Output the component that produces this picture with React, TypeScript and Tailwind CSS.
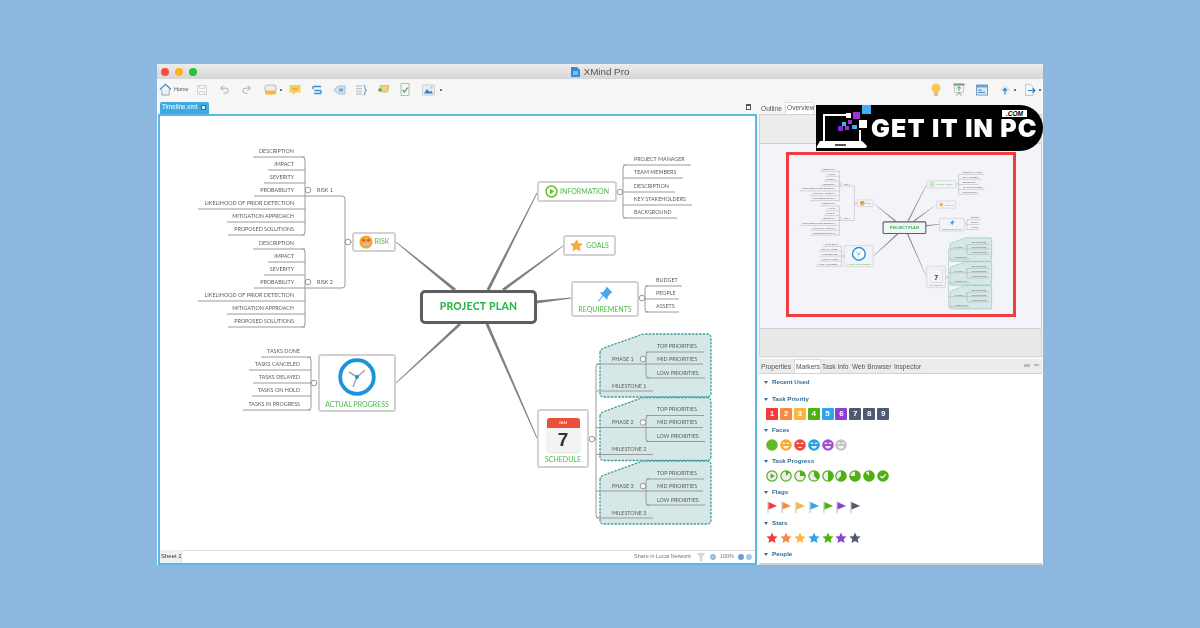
import { Redo2, Undo2 } from 'lucide-react';

// canvas origin in page pixels, the mind map data below is written in page pixels
const OX = 160;
const OY = 116;

const RED = '#f03c3c';
const ORANGE = '#f58a45';
const YELLOW = '#fbb63f';
const GREEN = '#4fb012';
const BLUE = '#30a5e8';
const PURPLE = '#8d3fd2';
const SLATE = '#4f5a72';

type Item = [string, number, number];

const risk1: Item[] = [
  ['DESCRIPTION', 151, 253],
  ['IMPACT', 164, 268],
  ['SEVERITY', 177, 264],
  ['PROBABILITY', 190, 254],
  ['LIKELIHOOD OF PRIOR DETECTION', 203, 198],
  ['MITIGATION APPROACH', 216, 227],
  ['PROPOSED SOLUTIONS', 229, 228],
];
const risk2: Item[] = risk1.map(([t, y, l]) => [t, y + 92, l]);
const progress: Item[] = [
  ['TASKS DONE', 351, 261],
  ['TASKS CANCELED', 364, 249],
  ['TASKS DELAYED', 377, 253],
  ['TASKS ON HOLD', 390, 252],
  ['TASKS IN PROGRESS', 404, 243],
];
const info: Item[] = [
  ['PROJECT MANAGER', 159, 691],
  ['TEAM MEMBERS', 172, 683],
  ['DESCRIPTION', 186, 675],
  ['KEY STAKEHOLDERS', 199, 692],
  ['BACKGROUND', 212, 677],
];
const reqs: Item[] = [
  ['BUDGET', 280, 682],
  ['PEOPLE', 293, 679],
  ['ASSETS', 306, 679],
];
const phases = [0, 63.5, 127];

function taper(x1: number, y1: number, x2: number, y2: number, w1: number, w2: number) {
  const dx = x2 - x1;
  const dy = y2 - y1;
  const len = Math.hypot(dx, dy);
  const nx = -dy / len;
  const ny = dx / len;
  return [
    [x1 + (nx * w1) / 2, y1 + (ny * w1) / 2],
    [x2 + (nx * w2) / 2, y2 + (ny * w2) / 2],
    [x2 - (nx * w2) / 2, y2 - (ny * w2) / 2],
    [x1 - (nx * w1) / 2, y1 - (ny * w1) / 2],
  ]
    .map((p) => p.join(','))
    .join(' ');
}

function leftBracket(x: number, y1: number, y2: number) {
  return `M${x - 3} ${y1} Q${x} ${y1} ${x} ${y1 + 3} V${y2 - 3} Q${x} ${y2} ${x - 3} ${y2}`;
}
function rightBracket(x: number, y1: number, y2: number) {
  return `M${x + 3} ${y1} Q${x} ${y1} ${x} ${y1 + 3} V${y2 - 3} Q${x} ${y2} ${x + 3} ${y2}`;
}

function Label({ x, y, text, right }: { x: number; y: number; text: string; right?: boolean }) {
  return (
    <span
      className={`absolute whitespace-nowrap leading-none text-[5.4px] text-[#5c5c5c] -translate-y-1/2 ${right ? '-translate-x-full' : ''}`}
      style={{ left: x - OX, top: y - OY + 1 }}
    >
      {text}
    </span>
  );
}

function Node({
  x,
  y,
  w,
  h,
  row,
  children,
}: {
  x: number;
  y: number;
  w: number;
  h: number;
  row?: boolean;
  children: React.ReactNode;
}) {
  return (
    <div
      className={`absolute flex items-center justify-center bg-white border-2 border-[#d2d2d2] rounded-[3px] text-[#4cb84c] text-[7px] leading-none whitespace-nowrap ${row ? 'flex-row gap-[2px]' : 'flex-col'}`}
      style={{ left: x - OX, top: y - OY, width: w, height: h }}
    >
      {children}
    </div>
  );
}

function Knob({ x, y }: { x: number; y: number }) {
  return <circle cx={x} cy={y} r={2.8} fill="#fff" stroke="#8a8a8a" strokeWidth={0.9} />;
}

function MindMap() {
  return (
    <div className="relative w-[595px] h-[434px] font-['Lato',sans-serif]">
      <svg className="absolute inset-0" width={595} height={434} viewBox={`${OX} ${OY} 595 434`}>
        {/* group boundaries */}
        {phases.map((d) => (
          <path
            key={d}
            d={`M600 ${353 + d} Q600 ${349 + d} 604 ${348 + d} L640 ${335 + d} Q642 ${334 + d} 645 ${334 + d} H707 Q711 ${334 + d} 711 ${338 + d} V${393 + d} Q711 ${397 + d} 707 ${397 + d} H604 Q600 ${397 + d} 600 ${393 + d} Z`}
            fill="#d6e7e7"
            stroke="#3f9c9c"
            strokeWidth={1.3}
            strokeDasharray="2.4 1.2"
          />
        ))}
        {/* main branches */}
        <g fill="#808080">
          <polygon points={taper(396, 242, 455, 290, 0.8, 3)} />
          <polygon points={taper(537, 193, 488, 290, 0.8, 3)} />
          <polygon points={taper(563, 246, 503, 290, 0.8, 3)} />
          <polygon points={taper(571, 298, 536, 302, 0.8, 3)} />
          <polygon points={taper(396, 383, 460, 324, 0.8, 3)} />
          <polygon points={taper(537, 438, 487, 324, 0.8, 3)} />
        </g>
        <g fill="none" stroke="#9a9a9a" strokeWidth={1}>
          {[...risk1, ...risk2, ...progress].map(([t, y, l]) => (
            <path key={`${t}${y}`} d={`M${l} ${y + 6} H${y > 340 ? 311 : 305}`} />
          ))}
          {[...info, ...reqs].map(([t, y, r]) => (
            <path key={`${t}${y}`} d={`M${y > 270 ? 645 : 623} ${y + 6} H${r}`} />
          ))}
          <path d={leftBracket(305, 157, 235)} />
          <path d={leftBracket(305, 249, 327)} />
          <path d={leftBracket(311, 357, 410)} />
          <path d={leftBracket(345, 196, 288)} />
          <path d="M305 196 H342 M305 288 H342 M345 242 H352" />
          <path d={rightBracket(623, 165, 218)} />
          <path d={rightBracket(645, 286, 312)} />
          <path d={rightBracket(596, 364, 518)} />
          <path d="M589 439 H596" />
          {phases.map((d) => (
            <g key={d}>
              <path d={`M596 ${364 + d} H703`} />
              <path d={`M596 ${391 + d} H653`} />
              <path d={`M646 ${352 + d} H704`} />
              <path d={`M646 ${378 + d} H705`} />
              <path d={rightBracket(646, 352 + d, 378 + d)} />
            </g>
          ))}
        </g>
        <Knob x={308} y={190} />
        <Knob x={308} y={282} />
        <Knob x={348} y={242} />
        <Knob x={314} y={383} />
        <Knob x={620} y={192} />
        <Knob x={642} y={298} />
        <Knob x={592} y={439} />
        {phases.map((d) => (
          <Knob key={d} x={643} y={359 + d} />
        ))}
      </svg>

      {[...risk1, ...risk2, ...progress].map(([t, y]) => (
        <Label key={`${t}${y}`} x={y > 340 ? 300 : 294} y={y} text={t} right />
      ))}
      {info.map(([t, y]) => (
        <Label key={t} x={634} y={y} text={t} />
      ))}
      {reqs.map(([t, y]) => (
        <Label key={t} x={656} y={y} text={t} />
      ))}
      <Label x={317} y={190} text="RISK 1" />
      <Label x={317} y={282} text="RISK 2" />
      {phases.map((d, i) => (
        <div key={d}>
          <Label x={612} y={359 + d} text={`PHASE ${i + 1}`} />
          <Label x={612} y={386 + d} text={`MILESTONE ${i + 1}`} />
          <Label x={657} y={346 + d} text="TOP PRIORITIES" />
          <Label x={657} y={359 + d} text="MID PRIORITIES" />
          <Label x={657} y={373 + d} text="LOW PRIORITIES" />
        </div>
      ))}

      {/* central topic */}
      <div
        className="absolute flex items-center justify-center bg-white border-[3px] border-[#5e5e5e] rounded-[5px] text-[#2fb84b] text-[10.4px] font-black tracking-[0.3px] whitespace-nowrap"
        style={{ left: 420 - OX, top: 290 - OY, width: 117, height: 34 }}
      >
        PROJECT PLAN
      </div>

      <Node x={537} y={181} w={80} h={21} row>
        <svg width={13} height={13} viewBox="0 0 13 13">
          <circle cx={6.5} cy={6.5} r={5.5} fill="#fff" stroke="#62c02a" strokeWidth={1.5} />
          <path d="M5 3.8 L9.2 6.5 L5 9.2 Z" fill="#62c02a" />
        </svg>
        <span>INFORMATION</span>
      </Node>
      <Node x={563} y={235} w={53} h={21} row>
        <svg width={13} height={13} viewBox="0 0 24 24">
          <path d="M12 1.5l3.2 6.9 7.5.9-5.6 5.1 1.5 7.4L12 18.1l-6.6 3.7 1.5-7.4-5.6-5.1 7.5-.9z" fill="#f9a93a" stroke="#e8973a" />
        </svg>
        <span className="ml-[1px]">GOALS</span>
      </Node>
      <Node x={571} y={281} w={68} h={36}>
        <svg width={18} height={18} viewBox="0 0 24 24" className="mb-[3px]">
          <path d="M3 22 L10 13" stroke="#6db5e8" strokeWidth={1.6} />
          <path d="M14 2 L22 10 L19.5 11 L15.5 16 L15 20 L5 10 L9 9.5 L13 5 Z" fill="#4aa6e8" />
        </svg>
        <span>REQUIREMENTS</span>
      </Node>
      <Node x={352} y={232} w={44} h={20} row>
        <svg width={14} height={14} viewBox="0 0 14 14">
          <circle cx={7} cy={7} r={6.6} fill="#f7a632" />
          <circle cx={4.6} cy={5.2} r={1.3} fill="#d9453a" />
          <circle cx={9.4} cy={5.2} r={1.3} fill="#d9453a" />
          <path d="M3 8 H11 L9.5 11 H4.5 Z" fill="#8fd3ea" />
        </svg>
        <span>RISK</span>
      </Node>
      <Node x={318} y={354} w={78} h={58}>
        <svg width={38} height={38} viewBox="0 0 38 38" className="mb-[5px]">
          <circle cx={19} cy={19} r={16.8} fill="#fff" stroke="#1a94dc" strokeWidth={3.8} />
          <path d="M19 19 L11 14 M19 19 L27 12 M19 19 L15 29" stroke="#a4a4a4" strokeWidth={1.5} />
          <circle cx={19} cy={19} r={2} fill="#1a94dc" />
        </svg>
        <span>ACTUAL PROGRESS</span>
      </Node>
      <Node x={537} y={409} w={52} h={59}>
        <div className="relative w-[33px] h-[34px] mt-[4px] mb-[4px] rounded-[3px] overflow-hidden bg-[#f3f3f3] shadow-sm flex flex-col items-center">
          <div className="w-full h-[10px] bg-[#e8503a] text-white text-[4.5px] leading-[10px] text-center">JAN</div>
          <div className="text-[#333] text-[19px] leading-[23px] font-bold font-['Liberation_Sans',sans-serif]">7</div>
        </div>
        <span>SCHEDULE</span>
      </Node>
    </div>
  );
}

function Priority({ n, color }: { n: number; color: string }) {
  return (
    <div
      className="w-[12px] h-[12px] rounded-[1px] text-white text-[8px] leading-[12px] text-center font-bold"
      style={{ backgroundColor: color }}
    >
      {n}
    </div>
  );
}

function Face({ color, i }: { color: string; i: number }) {
  return (
    <svg width={12} height={12} viewBox="0 0 12 12">
      <circle cx={6} cy={6} r={5.8} fill={color} />
      {i > 0 && (
        <g fill="#fff" opacity={0.85}>
          <rect x={2.6} y={3.6} width={2.6} height={1.4} />
          <rect x={6.8} y={3.6} width={2.6} height={1.4} />
          <path d={i === 2 ? 'M3.5 9 Q6 6.5 8.5 9 Z' : 'M3 7 H9 Q8.4 9.8 6 9.8 Q3.6 9.8 3 7 Z'} />
        </g>
      )}
    </svg>
  );
}

function Progress({ i }: { i: number }) {
  if (i === 0) {
    return (
      <svg width={12} height={12} viewBox="0 0 12 12">
        <circle cx={6} cy={6} r={5.2} fill="#eee" stroke={GREEN} strokeWidth={1.2} />
        <path d="M4.6 3.4 L8.6 6 L4.6 8.6 Z" fill={GREEN} />
      </svg>
    );
  }
  if (i === 8) {
    return (
      <svg width={12} height={12} viewBox="0 0 12 12">
        <circle cx={6} cy={6} r={5.8} fill={GREEN} />
        <path d="M3.4 6.2 L5.3 8 L8.8 4.3" fill="none" stroke="#fff" strokeWidth={1.2} />
      </svg>
    );
  }
  const a = (i / 8) * Math.PI * 2;
  const d = `M6 6 L6 .8 A5.2 5.2 0 ${i > 4 ? 1 : 0} 1 ${6 + 5.2 * Math.sin(a)} ${6 - 5.2 * Math.cos(a)} Z`;
  return (
    <svg width={12} height={12} viewBox="0 0 12 12">
      <circle cx={6} cy={6} r={5.2} fill="#eee" stroke={GREEN} strokeWidth={1.2} />
      <path d={d} fill={GREEN} />
    </svg>
  );
}

function Flag({ color }: { color: string }) {
  return (
    <svg width={12} height={12} viewBox="0 0 12 12">
      <path d="M2 .5 V12" stroke="#b9b9b9" strokeWidth={1} />
      <path d="M2.5 1 L11 5 L2.5 8.5 Z" fill={color} />
    </svg>
  );
}

function MarkerStar({ color }: { color: string }) {
  return (
    <svg width={12} height={12} viewBox="0 0 24 24">
      <path d="M12 1l3.3 7.3 7.9.8-5.9 5.3 1.7 7.8L12 18.2l-7 4 1.7-7.8L.8 9.1l7.9-.8z" fill={color} />
    </svg>
  );
}

function SectionTitle({ title }: { title: string }) {
  return (
    <div className="h-[10px] flex items-center gap-[4px] pl-[5px] pt-[2px]">
      <span className="w-0 h-0 border-x-[2px] border-x-transparent border-t-[3px] border-t-[#2f6f9f]" />
      <span className="text-[6.2px] font-bold leading-none text-[#2f6a98]">{title}</span>
    </div>
  );
}

function Section({ title, children }: { title: string; children?: React.ReactNode }) {
  return (
    <div className="h-[31px]">
      <SectionTitle title={title} />
      {children && <div className="h-[21px] flex items-center gap-[1.9px] pl-[7px]">{children}</div>}
    </div>
  );
}

function ToolDot() {
  return <span className="w-[2px] h-[2px] rounded-full bg-[#444] ml-[3px]" />;
}

function Toolbar() {
  return (
    <div className="h-[22px] bg-[#f6f6f6] flex items-center pl-[2px] pr-[2px]">
      <div className="flex items-center w-[37px]">
        <svg width={13} height={13} viewBox="0 0 14 14">
          <path d="M1 7 L7 1.5 L13 7" fill="none" stroke="#3d8fd0" strokeWidth={1.3} />
          <path d="M3 7 V13 H11 V7" fill="#eee" stroke="#999" strokeWidth={0.9} />
        </svg>
        <span className="text-[5.5px] text-[#555] ml-[2px]">Home</span>
      </div>
      <div className="flex items-center">
        <svg width={12} height={12} viewBox="0 0 12 12" className="mr-[11px]">
          <path d="M1.5 1.5 H10.5 V10.5 H1.5 Z M3.5 1.5 V4.5 H8.5 V1.5 M3.5 10.5 V7.5 H8.5 V10.5" fill="none" stroke="#d5d5d5" />
        </svg>
        <Undo2 size={11} color="#a4a4a4" className="mr-[11px]" />
        <Redo2 size={11} color="#a4a4a4" className="mr-[12px]" />
        <svg width={13} height={12} viewBox="0 0 13 12">
          <rect x={1} y={1} width={11} height={7} rx={2} fill="#eee" stroke="#aaa" strokeWidth={0.8} />
          <rect x={1} y={6.5} width={11} height={4} rx={1.5} fill="#f6b73c" />
        </svg>
        <ToolDot />
        <svg width={12} height={12} viewBox="0 0 12 12" className="ml-[7px]">
          <path d="M.5 1 H11.5 V8.5 H6.5 L4 11.5 V8.5 H.5 Z" fill="#f9cd5a" />
          <path d="M3.5 5 H8.5" stroke="#d39a2a" />
        </svg>
        <svg width={12} height={12} viewBox="0 0 12 12" className="ml-[10px]">
          <path d="M2.5 5 Q1 3 3 2.5 H10 M10 9.5 H3 M9.5 9.5 Q11 8 9.5 6.5 H3.5" fill="none" stroke="#2f92d4" strokeWidth={1.3} />
        </svg>
        <svg width={13} height={12} viewBox="0 0 13 12" className="ml-[10px]">
          <path d="M1 6 L5 2 H12 V10 H5 Z" fill="#cfe1ef" stroke="#8fb8d6" strokeWidth={0.8} />
          <rect x={6} y={4.5} width={4} height={3} fill="#6fa8d2" />
        </svg>
        <svg width={12} height={12} viewBox="0 0 12 12" className="ml-[9px]">
          <path d="M1 2 H7 M1 4.7 H7 M1 7.4 H7 M1 10 H7" stroke="#c9c9c9" strokeWidth={1.5} />
          <path d="M8.5 1 Q10 1 10 3 V5 L11.5 6 L10 7 V9 Q10 11 8.5 11" fill="none" stroke="#5b8fb8" />
        </svg>
        <svg width={13} height={12} viewBox="0 0 13 12" className="ml-[10px]">
          <path d="M3 1.5 H12 L10.5 8 H4 Z" fill="#f4cf7a" stroke="#c9a85c" strokeWidth={0.6} />
          <path d="M1 6 H5 M3 4 V8" stroke="#37b24d" strokeWidth={1.3} />
        </svg>
        <svg width={10} height={13} viewBox="0 0 10 13" className="ml-[10px]">
          <path d="M1 .5 H9 V12.5 H1 Z" fill="#f5f5f5" stroke="#a8a8a8" strokeWidth={0.8} />
          <path d="M2.6 7 L4.4 9 L7.6 4.6" fill="none" stroke="#41ad49" strokeWidth={1.2} />
        </svg>
        <svg width={13} height={12} viewBox="0 0 13 12" className="ml-[12px]">
          <rect x={.5} y={1} width={12} height={10} rx={1} fill="#e8eef4" stroke="#b5b5b5" strokeWidth={0.6} />
          <path d="M2 9.5 L5 5 L7.5 8 L9 6.5 L11 9.5 Z" fill="#2a82cf" />
          <circle cx={9.5} cy={3.6} r={1.1} fill="#f6b73c" />
        </svg>
        <span className="w-[2px] h-[2px] rounded-full bg-[#444] ml-[5px]" />
      </div>
      <div className="ml-auto flex items-center">
        <svg width={10} height={13} viewBox="0 0 10 13" className="mr-[12px]">
          <path d="M5 .5 A4.5 4.5 0 0 1 7.5 8.7 V10 H2.5 V8.7 A4.5 4.5 0 0 1 5 .5 Z" fill="#f8c856" />
          <rect x={3} y={10.5} width={4} height={2} fill="#aaa" />
        </svg>
        <svg width={12} height={13} viewBox="0 0 12 13" className="mr-[11px]">
          <rect x={.5} y={.5} width={11} height={2} fill="#8a8a8a" />
          <rect x={1.5} y={2.5} width={9} height={7} fill="#f5f5f5" stroke="#aaa" strokeWidth={0.6} />
          <path d="M6 3.5 V8 M4 5.5 L6 3.5 L8 5.5" stroke="#39ad48" fill="none" />
          <path d="M3.5 12.5 L6 9.5 L8.5 12.5" stroke="#888" fill="none" />
        </svg>
        <svg width={12} height={12} viewBox="0 0 12 12" className="mr-[11px]">
          <rect x={.5} y={1} width={11} height={10} fill="#dbe8f2" stroke="#6f9fc8" />
          <rect x={.5} y={1} width={11} height={2.4} fill="#6f9fc8" />
          <path d="M2 6 H6 M2 8.4 H9" stroke="#4e86b6" />
        </svg>
        <svg width={12} height={11} viewBox="0 0 12 11">
          <path d="M3 8 A2.5 2.5 0 0 1 3.3 3.2 A3.2 3.2 0 0 1 9 3.5 A2.3 2.3 0 0 1 9.3 8 Z" fill="#dfe7ee" />
          <path d="M6 10.5 V4.5 M4 6.5 L6 4.5 L8 6.5" stroke="#2c86d6" strokeWidth={1.2} fill="none" />
        </svg>
        <ToolDot />
        <svg width={12} height={12} viewBox="0 0 12 12" className="ml-[8px]">
          <path d="M1.5 .5 H6.5 L9 3 V11.5 H1.5 Z" fill="#f7f7f7" stroke="#b5b5b5" strokeWidth={0.7} />
          <path d="M4 6.5 H11 M8.6 4.2 L11 6.5 L8.6 8.8" stroke="#2c86d6" strokeWidth={1.2} fill="none" />
        </svg>
        <ToolDot />
      </div>
    </div>
  );
}

function Logo() {
  return (
    <div className="absolute left-[659px] top-[41px] w-[227px] h-[46px] bg-black rounded-r-[23px] blur-[0.3px]">
      <svg className="absolute left-0 top-0" width={60} height={46} viewBox="816 105 60 46">
        <path d="M824 141 V115 H846 M860 130 V141" fill="none" stroke="#fff" strokeWidth={2} />
        <path d="M820 141 H862 L867 146 Q867 148 865 148 H818 Q816 148 817 146 Z" fill="#fff" />
        <rect x={835} y={144} width={11} height={2} fill="#555" />
        <rect x={862} y={105} width={9} height={9} fill="#3fb0f5" />
        <rect x={853} y={112} width={7} height={7} fill="#9a36d8" />
        <rect x={846} y={113} width={5} height={5} fill="#fff" />
        <rect x={848} y={120} width={4} height={4} fill="#9a36d8" />
        <rect x={859} y={120} width={8} height={8} fill="#fff" />
        <rect x={842} y={122} width={4} height={4} fill="#3fb0f5" />
        <rect x={852} y={125} width={5} height={4} fill="#3fb0f5" />
        <rect x={838} y={126} width={5} height={5} fill="#7b2cc4" />
        <rect x={845} y={126} width={4} height={4} fill="#9a36d8" />
      </svg>
      <span className="absolute left-[55px] top-[13px] text-white text-[25px] leading-[20px] font-black tracking-[1.2px] whitespace-nowrap font-['Inter',sans-serif]">
        GET IT IN PC
      </span>
      <span className="absolute left-[186px] top-[5px] w-[25px] h-[7px] bg-white text-black text-[6.5px] leading-[7px] italic font-bold text-center font-['Liberation_Sans',sans-serif]">
        .COM
      </span>
    </div>
  );
}

export default function App() {
  return (
    <div className="w-[1200px] h-[628px] bg-[#8cb8e0] flex items-center justify-center font-['Liberation_Sans',sans-serif] overflow-hidden">
      <div className="relative w-[886px] h-[501px]">
        <div className="w-full h-full flex flex-col bg-[#f6f6f6] blur-[0.6px]">
          {/* title bar */}
          <div className="relative h-[15px] flex items-center justify-center pt-[1px] bg-gradient-to-b from-[#ececec] to-[#d6d6d6]">
            <div className="absolute left-[4px] top-[4px] flex gap-[6px]">
              <span className="w-[8px] h-[8px] rounded-full bg-[#fb4a44]" />
              <span className="w-[8px] h-[8px] rounded-full bg-[#fcb125]" />
              <span className="w-[8px] h-[8px] rounded-full bg-[#22c637]" />
            </div>
            <svg width={9} height={11} viewBox="0 0 9 11" className="mr-[4px]">
              <path d="M0 1 H6 L9 4 V11 H0 Z" fill="#2f8fdc" />
              <path d="M2 6 H7 M2 8 H7" stroke="#fff" strokeWidth={0.8} />
            </svg>
            <span className="text-[9.8px] leading-none text-[#555]">XMind Pro</span>
          </div>

          <Toolbar />

          <div className="flex-1 flex min-h-0">
            {/* editor */}
            <div className="w-[600px] flex flex-col pl-[1px]">
              <div className="h-[13px] flex items-end pl-[2px] relative">
                <div className="w-[49px] h-[12px] bg-[#3fa9e2] rounded-t-[2px] flex items-center pl-[2px] gap-[4px]">
                  <span className="text-[6.3px] leading-none text-white">Timeline.xmt</span>
                  <span className="w-[5px] h-[5px] bg-[#dfe9f0] border border-[#567]" />
                </div>
                <span className="absolute right-[6px] top-[3px] w-[5px] h-[6px] border border-[#555] border-t-2" />
              </div>
              <div className="flex-1 flex flex-col border-2 border-[#5cb6e6] bg-white min-h-0">
                <MindMap />
                <div className="flex-1 flex items-center bg-[#f0f0f0] text-[#666]">
                  <span className="w-[21px] pl-[1px] text-[6px] leading-none text-[#333] whitespace-nowrap">Sheet 1</span>
                  <div className="flex-1 h-full bg-white border-t border-l border-[#ddd] flex items-center justify-end pr-[3px]">
                    <span className="text-[5.5px] leading-none text-[#777] whitespace-nowrap">Share in Local Network</span>
                    <svg width={8} height={8} viewBox="0 0 8 8" className="ml-[6px]">
                      <path d="M.5 .5 H7.5 L4.8 4 V7.5 H3.2 V4 Z" fill="#ddd" stroke="#bbb" strokeWidth={0.5} />
                    </svg>
                    <span className="w-[6px] h-[6px] ml-[5px] rounded-full bg-[#a8c9e0] border border-[#7fb0d2]" />
                    <span className="text-[5.5px] leading-none text-[#777] ml-[4px]">100%</span>
                    <span className="w-[6px] h-[6px] ml-[4px] rounded-full bg-[#6f9fd0]" />
                    <span className="w-[6px] h-[6px] ml-[2px] rounded-full bg-[#a8c9e0]" />
                  </div>
                </div>
              </div>
            </div>

            {/* side panels */}
            <div className="flex-1 flex flex-col min-w-0 pl-[1px] pr-[1px]">
              <div className="h-[13px] flex items-end pl-[3px] text-[6.6px] leading-none text-[#555]">
                <span className="pb-[1px] w-[24px]">Outline</span>
                <span className="h-[12px] w-[29px] flex items-center pl-[1px] bg-white border-x border-t border-[#ddd]">Overview</span>
              </div>
              <div className="h-[243px] flex flex-col bg-[#e9e9e9] border border-[#d2d2d2] ml-[1px] shrink-0">
                <div className="h-[28px] bg-[#ececec]" />
                <div className="h-[186px] bg-[#f3f4f9] border-y border-[#cfcfcf] pl-[26px] pt-[8px]">
                  <div className="relative w-[230px] h-[165px] border-[3px] border-[#f03c3c]">
                    <div className="absolute -left-[4px] top-[1px] w-[595px] h-[434px] origin-top-left scale-[0.375] [&_div]:bg-transparent">
                      <MindMap />
                    </div>
                  </div>
                </div>
              </div>
              <div className="flex-1 mt-[2px] ml-[1px] flex flex-col min-h-0 bg-white border-b-2 border-[#cfcfcf]">
                <div className="relative h-[15px] bg-[#ececec] flex items-end pl-[2px] text-[6.6px] leading-none text-[#555] border-b border-[#d2d2d2] shrink-0">
                  <span className="pb-[2px] w-[33px]">Properties</span>
                  <span className="h-[14px] w-[27px] flex items-center pl-[1px] pt-[2px] bg-white border-x border-t border-[#ddd] mr-[1px]">Markers</span>
                  <span className="pb-[2px] w-[30px]">Task Info</span>
                  <span className="pb-[2px] w-[42px]">Web Browser</span>
                  <span className="pb-[2px]">Inspector</span>
                  <div className="absolute right-[3px] top-[5px] flex gap-[4px]">
                    <span className="w-[6px] h-[3px] bg-[#bbb]" />
                    <span className="w-[5px] h-[2px] bg-[#bbb]" />
                  </div>
                </div>
                <div className="flex-1 pt-[3px] overflow-hidden">
                  <div className="h-[17px]">
                    <SectionTitle title="Recent Used" />
                  </div>
                  <Section title="Task Priority">
                    {[RED, ORANGE, YELLOW, GREEN, BLUE, PURPLE, SLATE, SLATE, SLATE].map((c, i) => (
                      <Priority key={i} n={i + 1} color={c} />
                    ))}
                  </Section>
                  <Section title="Faces">
                    {['#62b82a', '#f9a733', '#ec4a3c', '#2a9ee2', '#a24fd6', '#c4c4c4'].map((c, i) => (
                      <Face key={c} color={c} i={i} />
                    ))}
                  </Section>
                  <Section title="Task Progress">
                    {[0, 1, 2, 3, 4, 5, 6, 7, 8].map((i) => (
                      <Progress key={i} i={i} />
                    ))}
                  </Section>
                  <Section title="Flags">
                    {[RED, ORANGE, YELLOW, BLUE, GREEN, PURPLE, SLATE].map((c) => (
                      <Flag key={c} color={c} />
                    ))}
                  </Section>
                  <Section title="Stars">
                    {[RED, ORANGE, YELLOW, BLUE, GREEN, PURPLE, SLATE].map((c) => (
                      <MarkerStar key={c} color={c} />
                    ))}
                  </Section>
                  <Section title="People" />
                </div>
              </div>
            </div>
          </div>
        </div>

        <Logo />
      </div>
    </div>
  );
}
